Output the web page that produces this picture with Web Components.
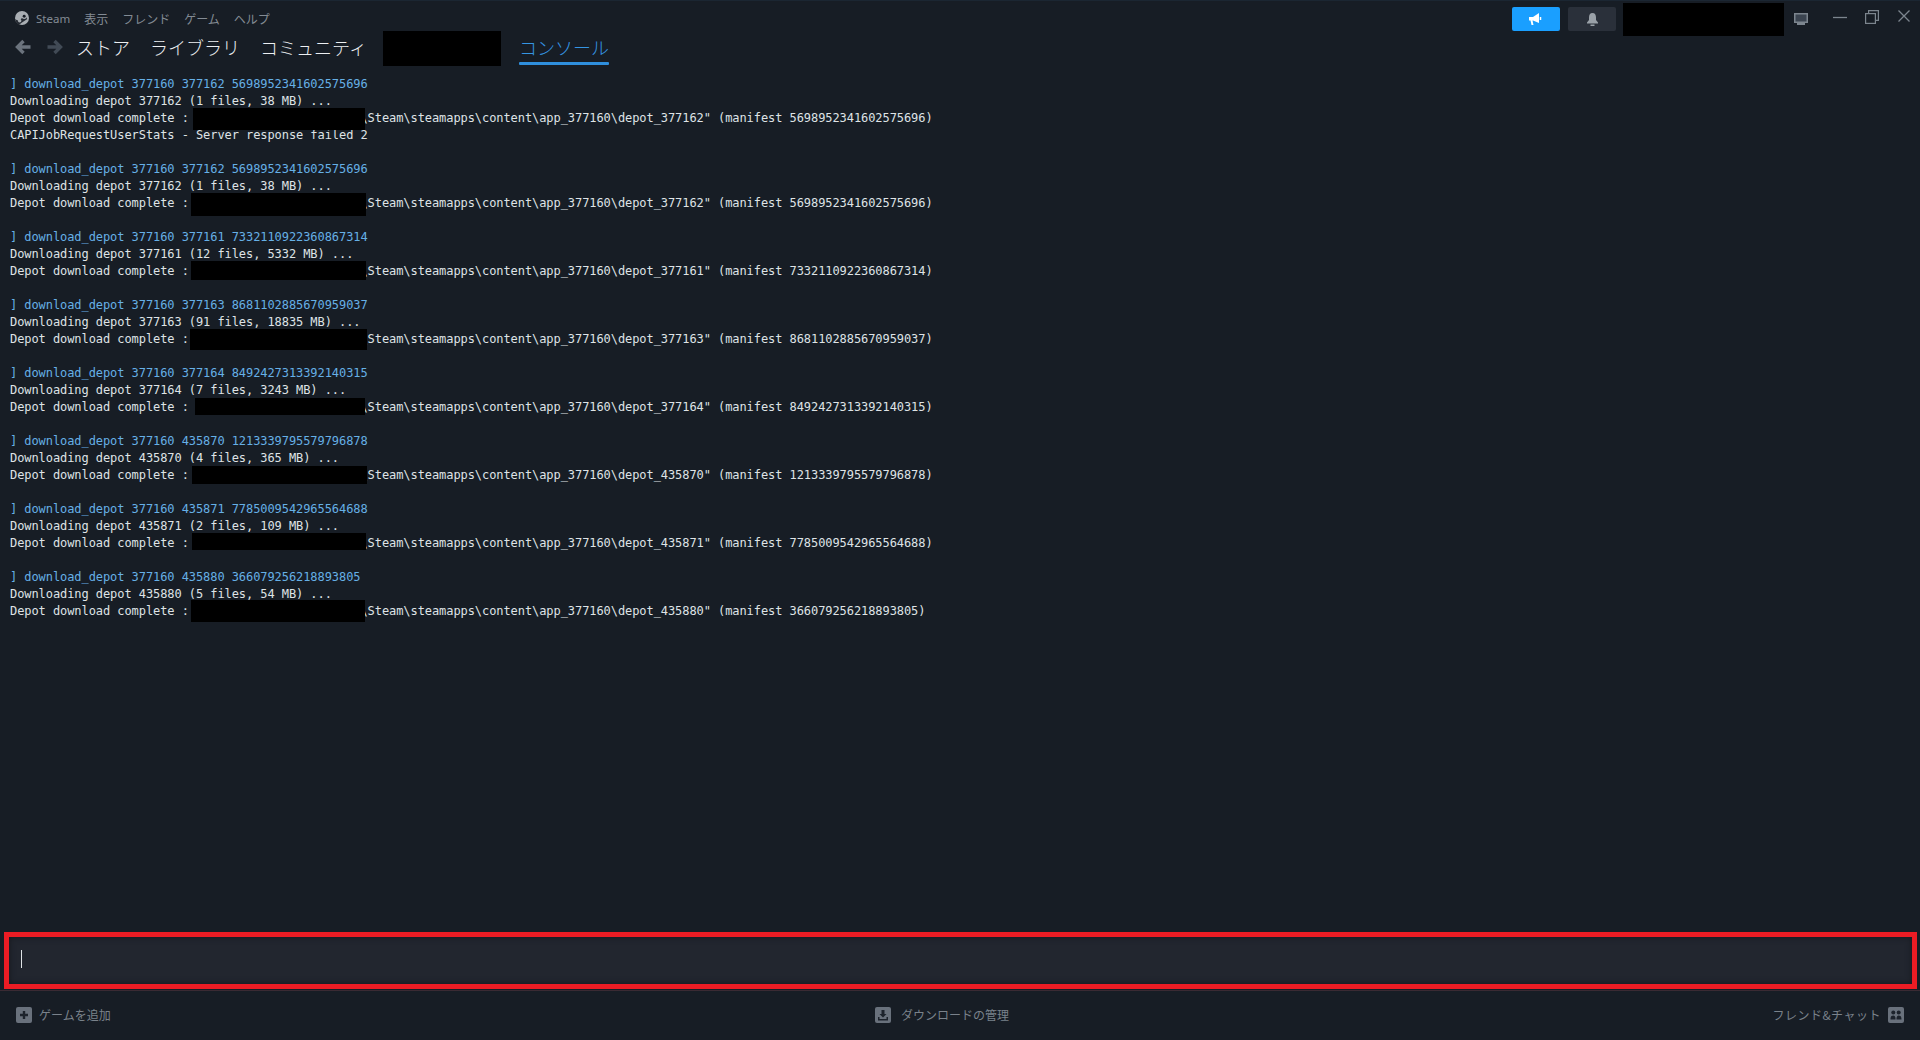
<!DOCTYPE html>
<html lang="ja"><head><meta charset="utf-8"><title>Steam</title>
<style>html,body{margin:0;height:100%;background:#171d25;overflow:hidden}</style></head>
<body><steam-app></steam-app>
<script>
const JP='"Noto Sans CJK JP","Noto Sans",sans-serif';
function def(name,html,init){customElements.define(name,class extends HTMLElement{constructor(){super();this.attachShadow({mode:'open'}).innerHTML=html;}connectedCallback(){init&&init.call(this,this.shadowRoot);}});}
def('steam-logo',`<style>:host{display:inline-flex}</style><svg width="14" height="14" viewBox="0 0 16 16" style="display:block"><circle cx="8" cy="8" r="8" fill="#a9aeb3"/><path d="M0 9.500 L5 11.500 L7 9 L11 3 L14 9 L8 13 L5 15.500 L2 14 Z" fill="#171d25" opacity=".9"/><circle cx="10.500" cy="6" r="3" fill="#a9aeb3"/><circle cx="10.500" cy="6" r="1.700" fill="#171d25"/><circle cx="5.300" cy="11.200" r="2" fill="#a9aeb3"/></svg>`);
def('menu-bar',`<style>:host{display:flex;align-items:center;height:16px;font:12px ${JP};color:#838b94;gap:14px;padding-left:15px}
.s{display:flex;align-items:center;gap:7px;font-family:"Noto Sans",sans-serif;font-size:11.500px}</style>
<span class="s"><steam-logo></steam-logo><span>Steam</span></span><span>表示</span><span>フレンド</span><span>ゲーム</span><span>ヘルプ</span>`);
def('nav-bar',`<style>:host{display:flex;align-items:center;height:34px;padding-left:15px;font:300 18px ${JP};color:#eceff2}
svg{display:block}.a{display:flex;gap:16px;margin-right:13px}
.t{margin-right:20px;white-space:nowrap}
.r{width:118px;height:35px;background:#000;margin-right:18px;align-self:flex-start;margin-top:1px}
.on{color:#3595e3;position:relative;margin:0;height:34px;display:flex;align-items:center}
.on::after{content:"";position:absolute;left:0;right:0;bottom:-1px;height:3px;background:#2f8fdd;border-radius:1px}</style>
<div class="a"><svg width="16" height="16" viewBox="0 0 16 16" fill="none" stroke="#6b737d" stroke-width="3.400"><path d="M15.500 8H3M8.500 2 2.500 8 8.500 14"/></svg><svg width="16" height="16" viewBox="0 0 16 16" fill="none" stroke="#414a55" stroke-width="3.400"><path d="M.5 8H13M7.500 2 13.500 8 7.500 14"/></svg></div>
<span class="t">ストア</span><span class="t">ライブラリ</span><span class="t" style="margin-right:16px">コミュニティ</span><div class="r"></div><span class="t on">コンソール</span>`);
def('top-actions',`<style>:host{display:flex;align-items:flex-start;padding-right:10px}
.b{width:48px;height:24px;border-radius:2px;display:flex;align-items:center;justify-content:center;margin-top:6px}
.blue{background:#1a9fff;margin-right:8px}.gray{background:#2a303a;margin-right:7px}
.r{width:161px;height:33px;background:#000;margin-top:2px;margin-right:10px}
.w{display:block}svg{display:block}</style>
<div class="b blue"><svg width="16" height="14" viewBox="0 0 16 14"><path d="M1 5h4l6-4v10L5 8.500H4.500L5.500 13H3.500L2.500 8.500H1Z" fill="#fff"/><path d="M12.500 5v3" stroke="#fff" stroke-width="1.500"/></svg></div>
<div class="b gray"><svg width="13" height="15" viewBox="0 0 13 15"><path d="M6.500 1C4 1 3 3 3 5.500V8L1 10.500V11.500H12V10.500L10 8V5.500C10 3 9 1 6.500 1Z" fill="#9aa1a8"/><rect x="4.500" y="12.500" width="4" height="1.500" fill="#9aa1a8"/></svg></div>
<div class="r"></div>
<div class="w" style="margin:12px 25px 0 0"><svg width="14" height="13" viewBox="0 0 14 13"><rect x=".75" y=".75" width="12.500" height="8.500" fill="#3b4450" stroke="#7c858e" stroke-width="1.500"/><rect x="3" y="10" width="8" height="2" fill="#7c858e"/></svg></div>
<div class="w" style="margin:10px 18px 0 0"><svg width="14" height="14" viewBox="0 0 14 14"><path d="M0 6.500h14" stroke="#7c858e" stroke-width="1.300"/></svg></div>
<div class="w" style="margin:9px 19px 0 0"><svg width="14" height="14" viewBox="0 0 14 14" fill="none" stroke="#7c858e" stroke-width="1.200"><rect x=".6" y="3.600" width="9.800" height="9.800"/><path d="M3.600 3.500V.6h9.800v9.800h-3"/></svg></div>
<div class="w" style="margin:9px 0 0 0"><svg width="12" height="12" viewBox="0 0 12 12" stroke="#7c858e" stroke-width="1.300"><path d="M.5.500l11 11M11.500.500l-11 11"/></svg></div>`);
def('title-bar',`<style>:host{display:flex;justify-content:space-between;align-items:flex-start;height:65px;flex:none;border-top:1px solid #1b2632;box-sizing:border-box}
.l{display:flex;flex-direction:column;padding-top:9px;gap:4px}</style>
<div class="l"><menu-bar></menu-bar><nav-bar></nav-bar></div><top-actions></top-actions>`);
def('redact-box',`<style>:host{position:absolute;background:#000;display:block}</style>`,function(){const g=k=>this.getAttribute(k);this.style.cssText=`left:${g('x')}px;top:${g('y')-65}px;width:${g('w')}px;height:${g('h')}px`;});
def('log-line',`<style>:host{display:block;height:17px;line-height:17px;white-space:pre;color:#dfe3e6}:host([cmd]){color:#66b0e6}</style><slot></slot>`);
const groups=[
 ['377162','5698952341602575696','1 files, 38 MB',193,108,172,22,true],
 ['377162','5698952341602575696','1 files, 38 MB',191,193,175,23],
 ['377161','7332110922360867314','12 files, 5332 MB',191,261,175,19],
 ['377163','8681102885670959037','91 files, 18835 MB',190,329,177,21],
 ['377164','8492427313392140315','7 files, 3243 MB',195,398,170,17],
 ['435870','1213339795579796878','4 files, 365 MB',192,466,175,18],
 ['435871','7785009542965564688','2 files, 109 MB',192,533,174,17],
 ['435880','366079256218893805','5 files, 54 MB',191,600,174,22]];
let log='';
for(const [d,m,s,x,y,w,h,extra] of groups){
 log+=`<log-line cmd>] download_depot 377160 ${d} ${m}</log-line><log-line>Downloading depot ${d} (${s}) ...</log-line><log-line>Depot download complete : ${' '.repeat(23)}\\Steam\\steamapps\\content\\app_377160\\depot_${d}" (manifest ${m})</log-line>`;
 if(extra)log+=`<log-line>CAPIJobRequestUserStats - Server response failed 2</log-line>`;
 log+=`<log-line> </log-line><redact-box x="${x}" y="${y}" w="${w}" h="${h}"></redact-box>`;
}
def('console-log',`<style>:host{display:block;flex:1;min-height:0;position:relative;padding:11px 0 0 10px;font:12px/17px "DejaVu Sans Mono","Liberation Mono",monospace;letter-spacing:-.073px;overflow:hidden}</style>`+log);
def('console-input',`<style>:host{display:flex;flex:none;align-items:center;margin:0 3px 1px 4px;height:57px;border:5px solid #ec1c24;box-sizing:border-box;background:#22262f;box-shadow:inset 0 0 6px #14171d;padding-left:12px}
i{display:block;width:1px;height:18px;background:#dfe3e6;margin-top:-3px}</style><i></i>`);
def('foot-icon',`<style>:host{display:inline-flex;width:16px;height:16px;background:#69717c;border-radius:2px;align-items:center;justify-content:center}</style><slot></slot>`);
def('foot-bar',`<style>:host{display:grid;flex:none;grid-template-columns:1fr auto 1fr;align-items:center;height:50px;padding:0 16px 2px;font:12px ${JP};color:#7a828b;border-top:1px solid #3a2a33;box-sizing:border-box}
div{display:flex;align-items:center;gap:7px}.m{gap:10px;margin-right:36px}.r{justify-content:flex-end}svg{display:block}.f{letter-spacing:.5px}</style>
<div><foot-icon><svg width="10" height="10" viewBox="0 0 10 10"><path d="M5 1v8M1 5h8" stroke="#1d232c" stroke-width="2.400"/></svg></foot-icon><span>ゲームを追加</span></div>
<div class="m"><foot-icon><svg width="12" height="12" viewBox="0 0 12 12" fill="#1d232c"><path d="M4.500 1h3v4h2L6 8.500 2.500 5h2Z"/><path d="M1 8h1.500v2h7V8H11v3.500H1Z"/></svg></foot-icon><span>ダウンロードの管理</span></div>
<div class="r"><span class="f">フレンド&amp;チャット</span><foot-icon><svg width="12" height="10" viewBox="0 0 12 10" fill="#1d232c"><circle cx="3.300" cy="2.500" r="2"/><circle cx="8.700" cy="2.500" r="2"/><path d="M.5 9.500C.5 6.500 1.500 5.500 3.300 5.500S5.500 7 5.500 9.500ZM6.500 9.500C6.500 7 7 5.500 8.700 5.500S11.500 6.500 11.500 9.500Z"/></svg></foot-icon></div>`);
def('steam-app',`<style>:host{display:flex;flex-direction:column;height:1040px;background:#171d25;font-family:${JP}}</style>
<title-bar></title-bar><console-log></console-log><console-input></console-input><foot-bar></foot-bar>`);
</script></body></html>
